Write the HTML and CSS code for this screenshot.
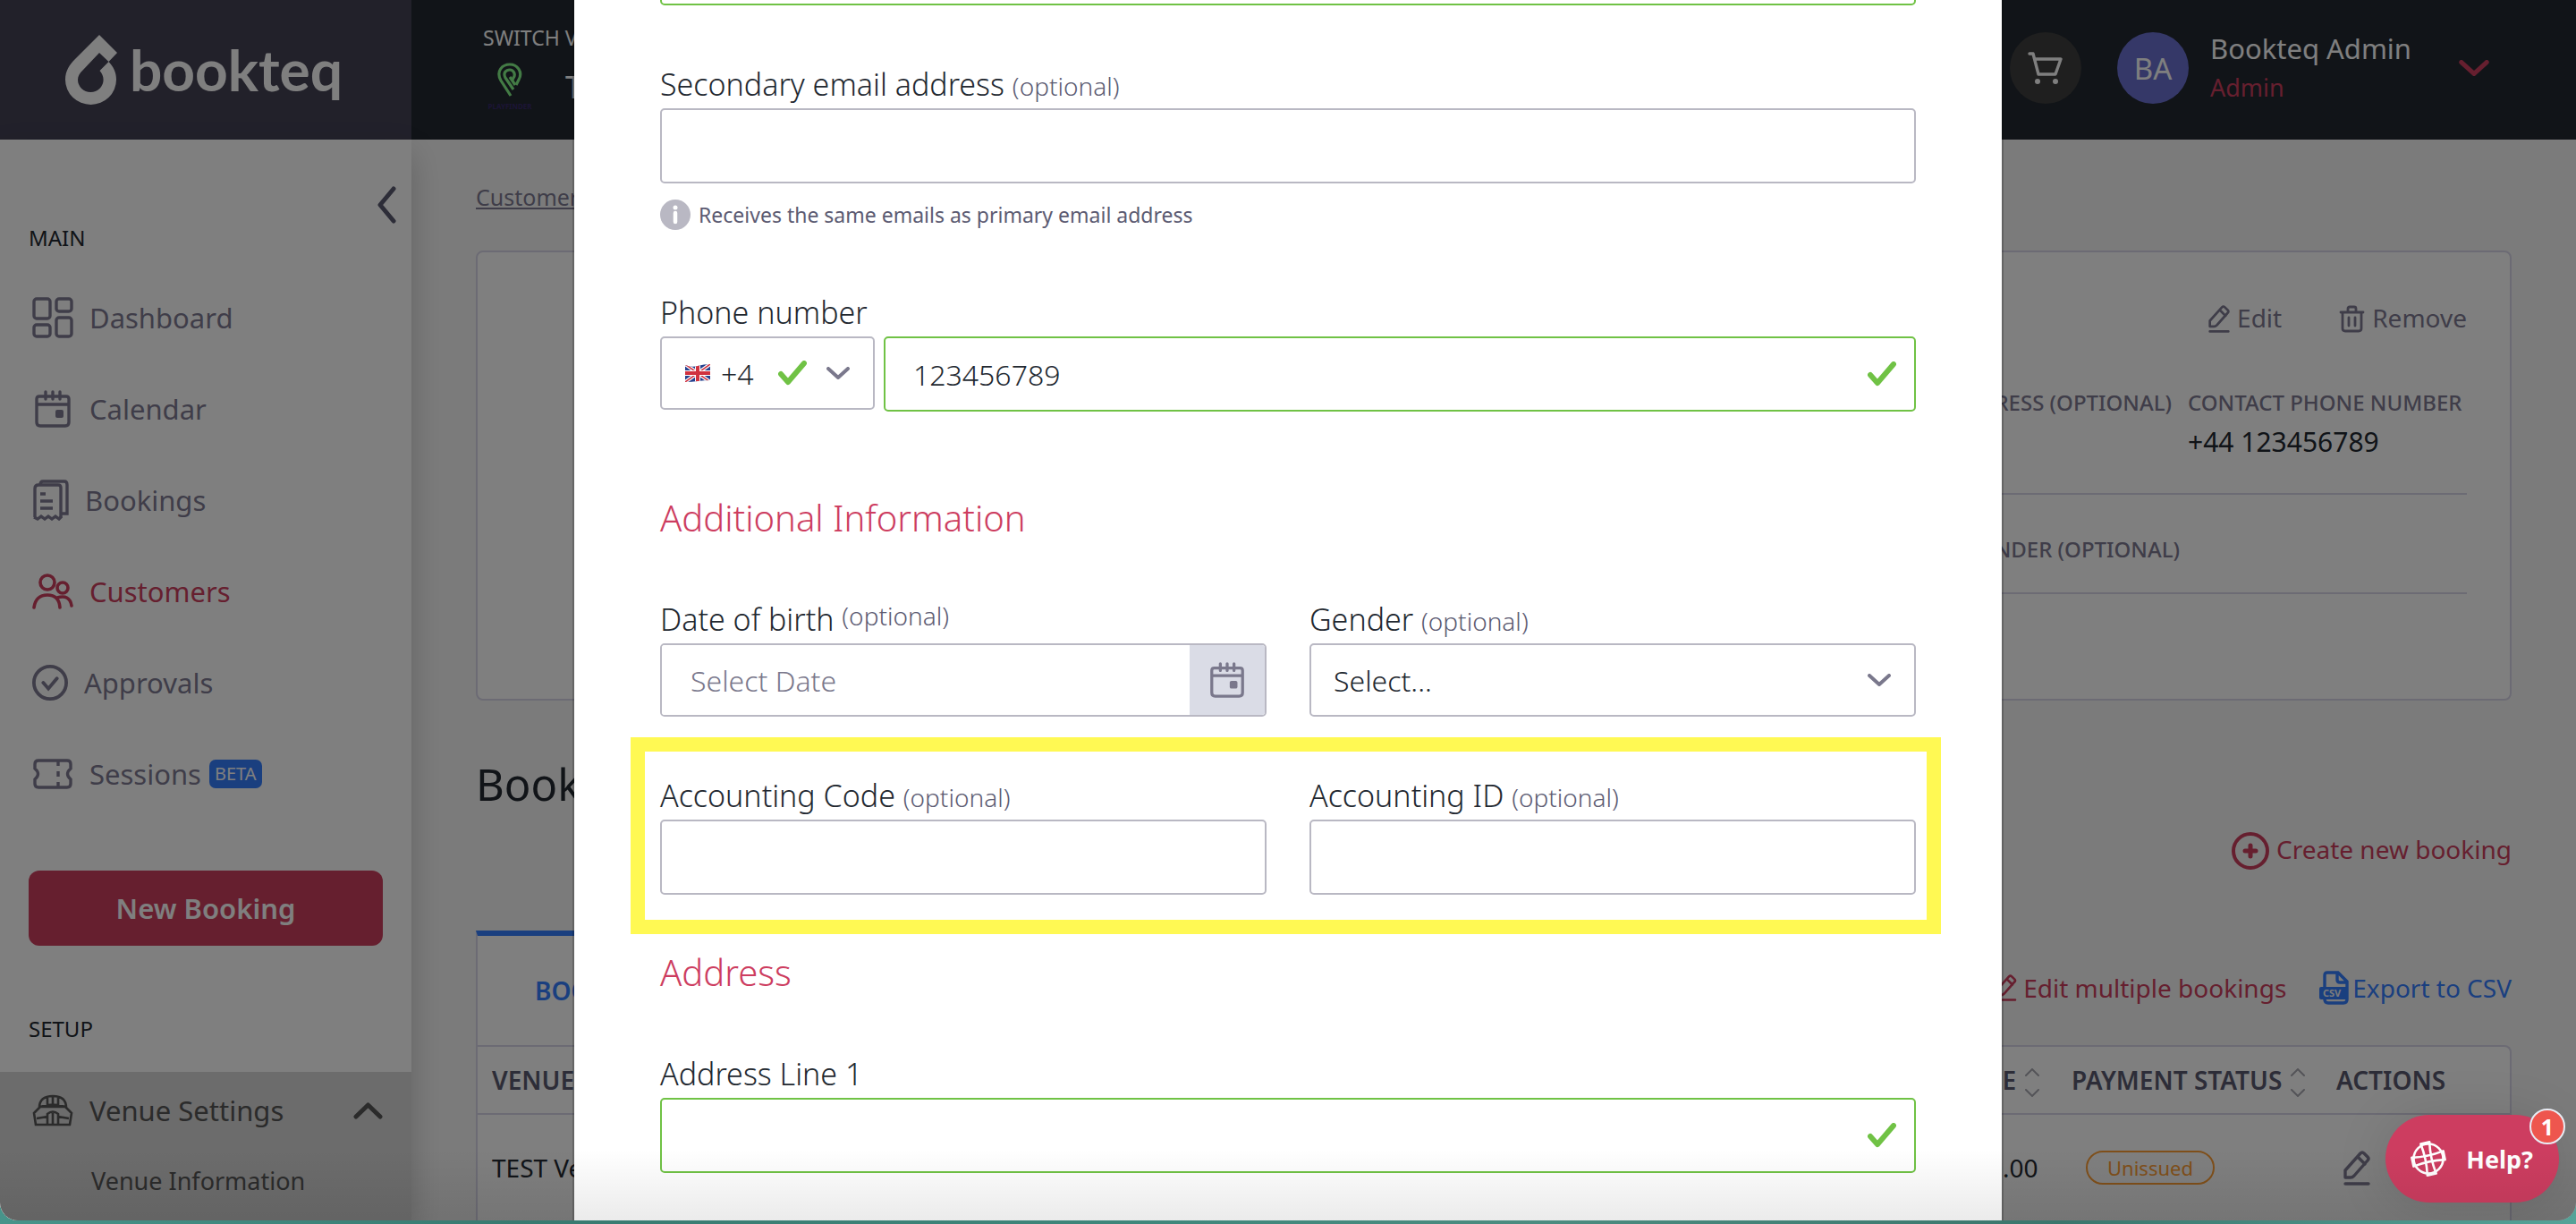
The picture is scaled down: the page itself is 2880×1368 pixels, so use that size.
FILE: index.html
```
<!DOCTYPE html>
<html lang="en">
<head>
<meta charset="utf-8">
<title>Bookteq – Edit customer</title>
<link rel="stylesheet" href="styles.css">
</head>
<body>
<svg class="sprite" aria-hidden="true">
  <symbol id="i-pencil" viewBox="0 0 30 39"><path d="M2 30v-8L19 3q2-2 4 0l4 4q2 2 0 4L12 28q-2 2-4 2zM16 7l8 8M2 37h26" fill="none" stroke="currentColor" stroke-width="3.400" stroke-linecap="round" stroke-linejoin="round"/></symbol>
  <symbol id="i-calendar" viewBox="0 0 46 46"><path d="M8 9h30q3 0 3 3v26q0 4-4 4H9q-4 0-4-4V12q0-3 3-3zM5 18h36M15 4v8M23 4v8M31 4v8" fill="none" stroke="currentColor" stroke-width="3.400" stroke-linecap="round"/><rect x="26" y="24" width="9" height="9" rx="2" fill="currentColor"/></symbol>
  <symbol id="i-down" viewBox="0 0 26 14"><path d="M2 2l11 10L24 2" fill="none" stroke="currentColor" stroke-width="4" stroke-linecap="round" stroke-linejoin="round"/></symbol>
  <symbol id="i-check" viewBox="0 0 32 28"><path d="M3 15l8 9L29 3" fill="none" stroke="currentColor" stroke-width="6" stroke-linecap="round" stroke-linejoin="round"/></symbol>
  <symbol id="i-sort" viewBox="0 0 18 32"><path d="M2 8l7-7 7 7M2 24l7 7 7-7" fill="none" stroke="currentColor" stroke-width="2" stroke-linecap="round"/></symbol>
</svg>
<div class="window">
  <div class="app">
    <header class="topbar">
      <a class="logo" href="#">
        <svg width="58" height="78" viewBox="0 0 58 78"><path fill="currentColor" fill-rule="evenodd" d="M38 0l20 20-9.500 10C54 36 57 42 57 50a28.500 28 0 0 1-57 0C0 40 5 33 11 27zM38 20L20 39c-4 4-6 7-6 11a14.300 14 0 0 0 28.600 0c0-4-1.600-7-4.100-10l10-10z"/></svg>
        <span>bookteq</span>
      </a>
      <div class="switch">
        <div class="switch-label">SWITCH VENUE</div>
        <div class="switch-row">
          <span class="venue-logo">
            <svg width="28" height="40" viewBox="0 0 28 40"><path d="M15 37L4 20C-2 9 6 2 14 2s15 8 10 17l-3 6M18 30L9 17c-3-6 1-9 5-9s7 5 4 9l-1 2M20 25l-6-9" fill="none" stroke="currentColor" stroke-width="3.200"/></svg>
            <small>PLAYFINDER</small>
          </span>
          <span class="venue-name">TEST</span>
        </div>
      </div>
      <button class="cart" type="button" aria-label="Basket"><svg width="40" height="38" viewBox="0 0 40 38"><path d="M2 3h4l6 23h19l6-17H8" fill="none" stroke="currentColor" stroke-width="3.400" stroke-linecap="round" stroke-linejoin="round"/><circle cx="11" cy="34" r="3" fill="currentColor"/><circle cx="31" cy="34" r="3" fill="currentColor"/></svg></button>
      <button class="user" type="button">
        <span class="avatar">BA</span>
        <span class="user-text"><span class="user-name">Bookteq Admin</span><span class="user-role">Admin</span></span>
        <svg class="user-chev" width="34" height="18"><use href="#i-down"/></svg>
      </button>
    </header>
    <nav class="sidebar">
      <button class="collapse" type="button" aria-label="Collapse menu"><svg width="22" height="42" viewBox="0 0 22 42"><path d="M19 3L4 21l15 18" fill="none" stroke="currentColor" stroke-width="5" stroke-linecap="round" stroke-linejoin="round"/></svg></button>
      <div class="side-label">MAIN</div>
      <ul class="menu">
        <li><a href="#"><svg width="46" height="46" viewBox="0 0 46 46" fill="none" stroke="currentColor" stroke-width="3.400"><rect x="2" y="2" width="18" height="22" rx="3"/><rect x="27" y="2" width="17" height="14" rx="3"/><rect x="2" y="31" width="18" height="13" rx="3"/><rect x="27" y="23" width="17" height="21" rx="3"/></svg>Dashboard</a></li>
        <li><a href="#"><svg width="46" height="46"><use href="#i-calendar"/></svg>Calendar</a></li>
        <li><a href="#"><svg width="41" height="46" viewBox="0 0 41 46" fill="none" stroke="currentColor" stroke-width="3.400"><path d="M3 42V10q0-4 4-4h22q3 0 3 3v33M9 6q0-4 3-4h24q3 0 3 4v32h-6M9 16h6M9 24h14M9 32h14"/><path d="M2 42l4 2 4-3 4 3 4-3 4 3 4-3 4 3 3-3"/></svg>Bookings</a></li>
        <li class="active"><a href="#"><svg width="46" height="40" viewBox="0 0 46 40" fill="none" stroke="currentColor" stroke-width="3.600" stroke-linecap="round"><circle cx="17" cy="10" r="8"/><circle cx="34" cy="16" r="6"/><path d="M2 38q2-14 15-14t14 14M28 27q14-4 16 9"/></svg>Customers</a></li>
        <li><a href="#"><svg width="40" height="42" viewBox="0 0 42 42" fill="none" stroke="currentColor" stroke-width="4" stroke-linecap="round"><circle cx="21" cy="21" r="19"/><path d="M13 21l6 7 10-12"/></svg>Approvals</a></li>
        <li><a href="#"><svg width="46" height="34" viewBox="0 0 46 34" fill="none" stroke="currentColor" stroke-width="3.400"><path d="M7 2h32q4 0 4 4v5q-7 6 0 12v5q0 4-4 4H7q-4 0-4-4v-5q7-6 0-12V6q0-4 4-4zM29 3v5M29 14v6M29 26v5"/></svg>Sessions<span class="beta">BETA</span></a></li>
      </ul>
      <button class="new-booking" type="button">New Booking</button>
      <div class="side-label setup">SETUP</div>
      <div class="venue-menu">
        <a class="venue-head" href="#"><svg width="46" height="36" viewBox="0 0 46 36" fill="none" stroke="currentColor" stroke-width="2.600"><path d="M8 15q0-13 15-13t15 13M4 34L2 21l7-7q14-5 28 0l7 7-2 13zM9 14h28M17 3v10M23 3v10M29 3v10M17 33V22q6-5 12 0v11M23 21v12M5 27l12-2M41 27l-12-2"/></svg><span>Venue Settings</span><svg class="up" width="33" height="19" viewBox="0 0 33 19"><path d="M3 16L16.500 3 30 16" fill="none" stroke="currentColor" stroke-width="5" stroke-linecap="round" stroke-linejoin="round"/></svg></a>
        <a class="venue-sub" href="#">Venue Information</a>
      </div>
    </nav>
    <main class="main">
      <a class="crumb" href="#">Customers</a>
      <section class="card">
        <div class="card-actions">
          <a href="#"><svg width="24" height="31"><use href="#i-pencil"/></svg>Edit</a>
          <a href="#"><svg width="29" height="31" viewBox="0 0 29 31" fill="none" stroke="currentColor" stroke-width="2.800" stroke-linecap="round" stroke-linejoin="round"><path d="M2 8h25M4 8v18q0 3 3 3h15q3 0 3-3V8M10 8V4q0-2 2-2h5q2 0 2 2v4M11 14v9M18 14v9"/></svg>Remove</a>
        </div>
        <dl class="facts">
          <div><dt>SECONDARY EMAIL ADDRESS (OPTIONAL)</dt></div>
          <div class="fact-phone"><dt>CONTACT PHONE NUMBER</dt><dd>+44 123456789</dd></div>
        </dl>
        <dl class="facts facts-second">
          <div><dt>GENDER (OPTIONAL)</dt></div>
        </dl>
      </section>
      <h1>Bookings</h1>
      <div class="create-row"><a class="create" href="#"><svg width="42" height="42" viewBox="0 0 42 42" fill="none" stroke="currentColor" stroke-width="4" stroke-linecap="round"><circle cx="21" cy="21" r="19"/><path d="M21 15v12M15 21h12" stroke-width="5"/></svg>Create new booking</a></div>
      <div class="tabs">
        <button class="tab" type="button">BOOKINGS</button>
        <div class="tab-links">
          <a class="edit-many" href="#"><svg width="24" height="30"><use href="#i-pencil"/></svg>Edit multiple bookings</a>
          <a class="export" href="#"><svg width="34" height="38" viewBox="0 0 34 38"><path d="M6 18V5q0-3 3-3h12l10 10v20q0 4-4 4H10q-4 0-4-4M20 2v8q0 3 3 3h8" fill="none" stroke="currentColor" stroke-width="3.400"/><rect y="18" width="32" height="14" rx="2" fill="currentColor"/><text class="csv" x="4" y="29">CSV</text></svg>Export to CSV</a>
        </div>
      </div>
      <table class="bookings">
        <colgroup><col><col class="c-price"><col class="c-pay"><col class="c-act"></colgroup>
        <thead><tr><th>VENUE</th><th>PRICE<svg width="18" height="32"><use href="#i-sort"/></svg></th><th>PAYMENT STATUS<svg width="18" height="32"><use href="#i-sort"/></svg></th><th>ACTIONS</th></tr></thead>
        <tbody><tr><td>TEST Venue</td><td>£150.00</td><td><span class="status">Unissued</span></td><td><a class="row-edit" href="#" aria-label="Edit booking"><svg width="30" height="39"><use href="#i-pencil"/></svg></a></td></tr></tbody>
      </table>
    </main>
  </div>

  <div class="scrim">
    <form class="modal">
      <div class="modal-body">
        <input class="box valid" type="email" aria-label="Primary email address">
        <div class="field first">
          <label for="email2">Secondary email address <span class="opt">(optional)</span></label>
          <input class="box" id="email2" type="email">
          <p class="hint"><svg width="34" height="34" viewBox="0 0 34 34"><circle cx="17" cy="17" r="17" fill="#b9b8c3"/><circle cx="17" cy="9" r="2.500" fill="#fff"/><path d="M17 15v10" stroke="#fff" stroke-width="4.500" stroke-linecap="round"/></svg>Receives the same emails as primary email address</p>
        </div>
        <div class="field phone">
          <label for="phone">Phone number</label>
          <div class="phone-row">
            <div class="wrap code">
              <svg class="flag" width="28" height="22" viewBox="0 0 28 22"><clipPath id="wave"><path d="M0 2q7 3 14 1t14-2v18q-7 0-14 1T0 21z"/></clipPath><g clip-path="url(#wave)"><path fill="#24408e" d="M0 0h28v22H0z"/><path d="M0 1l28 20M28 1L0 21" stroke="#fff" stroke-width="4"/><path d="M0 1l28 20M28 1L0 21" stroke="#d0313f" stroke-width="1.500"/><path d="M14 0v22M0 11h28" stroke="#fff" stroke-width="6"/><path d="M14 0v22M0 11h28" stroke="#d0313f" stroke-width="4"/></g></svg>
              <select class="box short" aria-label="Country code"><option>+4</option></select>
              <svg class="tick" width="32" height="28"><use href="#i-check"/></svg>
              <svg class="chev" width="26" height="14"><use href="#i-down"/></svg>
            </div>
            <div class="wrap number">
              <input class="box valid" id="phone" type="tel" value="123456789">
              <svg class="tick" width="32" height="28"><use href="#i-check"/></svg>
            </div>
          </div>
        </div>
        <h2>Additional Information</h2>
        <div class="cols">
          <div class="field">
            <label for="dob">Date of birth <span class="opt raised">(optional)</span></label>
            <div class="date"><input class="date-text" id="dob" type="text" placeholder="Select Date"><button class="date-btn" type="button" aria-label="Open calendar"><svg width="44" height="44"><use href="#i-calendar"/></svg></button></div>
          </div>
          <div class="field">
            <label for="gender">Gender <span class="opt">(optional)</span></label>
            <div class="wrap"><select class="box short gender" id="gender"><option>Select...</option></select><svg class="chev" width="26" height="14"><use href="#i-down"/></svg></div>
          </div>
        </div>
        <div class="cols highlight">
          <div class="field"><label for="acode">Accounting Code <span class="opt">(optional)</span></label><input class="box" id="acode" type="text"></div>
          <div class="field"><label for="aid">Accounting ID <span class="opt">(optional)</span></label><input class="box" id="aid" type="text"></div>
        </div>
        <h2 class="tight">Address</h2>
        <div class="field">
          <label for="addr1">Address Line 1</label>
          <div class="wrap"><input class="box valid" id="addr1" type="text"><svg class="tick" width="32" height="28"><use href="#i-check"/></svg></div>
        </div>
      </div>
    </form>
  </div>
  <button class="help" type="button">
    <svg width="40" height="40" viewBox="0 0 40 40" fill="none" stroke="currentColor" stroke-width="2.600" stroke-linejoin="round"><circle cx="20" cy="20" r="16.500"/><path transform="rotate(-12 20 20)" d="M15 2Q18 20 15 38h10Q22 20 25 2zM2 15Q20 18 38 15v10Q20 22 2 25z"/></svg>
    <span>Help?</span>
    <span class="count">1</span>
  </button>
</div>
</body>
</html>
```
FILE: styles.css
```
* { box-sizing: border-box; }

body {
  margin: 0;
  background: linear-gradient(90deg, #47948a, #387a70 20%, #3f877b 45%, #4c8c80 60%, #3a766c 80%, #55a398);
  color: #222830;
  font-family: "Noto Sans", "Open Sans", sans-serif;
  font-size: 28px;
}

a { color: inherit; text-decoration: none; }
button, input, select { font-family: inherit; color: inherit; }
button { border: 0; padding: 0; background: none; }
svg { flex: none; display: block; }
.sprite { position: absolute; width: 0; height: 0; }

.window {
  position: relative;
  height: calc(100vh - 4px);
  overflow: hidden;
  border-radius: 0 0 20px 20px;
}

/* soft shade along the bottom edge of the window */
.window::after {
  content: "";
  position: absolute;
  inset: auto 0 0;
  z-index: 4;
  height: 80px;
  background: linear-gradient(transparent, rgba(0, 0, 0, .08));
  pointer-events: none;
}

.app {
  display: grid;
  grid-template: 156px auto / 460px minmax(0, 1fr);
  min-height: 100%;
  background: #f7f7f7;
}

/* top bar */
.topbar {
  grid-column: 1 / -1;
  display: flex;
  align-items: center;
  padding-right: 97px;
  background: #222830;
  color: #fff;
}
.logo {
  display: flex;
  align-items: center;
  gap: 14px;
  align-self: stretch;
  width: 460px;
  padding-left: 73px;
  background: #444255;
  font: 700 64px/78px Lato, sans-serif;
}
.switch { flex: 1; align-self: flex-start; padding: 26px 0 0 80px; }
.switch-label { font-size: 23px; line-height: 32px; }
.switch-row { display: flex; align-items: center; gap: 32px; padding-top: 12px; }
.venue-logo { display: flex; flex-direction: column; align-items: center; gap: 4px; width: 60px; color: #86f68a; }
.venue-logo small { color: #38286c; font-size: 8px; font-weight: 700; line-height: 10px; }
.venue-name { font-size: 34px; line-height: 46px; }
.cart, .user { margin-bottom: 4px; }
.cart, .avatar {
  display: flex;
  align-items: center;
  justify-content: center;
  width: 80px;
  height: 80px;
  border-radius: 50%;
}
.cart { margin-right: 40px; background: #3e3e3e; color: #fff; }
.user { display: flex; align-items: center; text-align: left; }
.avatar { margin-right: 24px; background: #6a70d0; font-size: 33px; }
.user-text { display: flex; flex-direction: column; width: 278px; }
.user-name { font-size: 31px; line-height: 44px; }
.user-role { font-size: 27px; line-height: 44px; color: #cc3f5e; }
.user-chev { color: #cc3f5e; }

/* sidebar */
.sidebar {
  z-index: 1;
  display: flex;
  flex-direction: column;
  padding-top: 52px;
  background: #fff;
  color: #7e7b92;
  box-shadow: 0 16px 34px rgba(0, 0, 0, .2);
}
.collapse { align-self: flex-end; margin-right: 17px; color: #5a5a70; }
.side-label { padding-left: 32px; font-size: 24px; line-height: 32px; color: #222830; }
.menu { margin: 22px 0 57px; padding: 0; list-style: none; }
.menu a {
  display: flex;
  align-items: center;
  gap: 18px;
  height: 102px;
  padding-left: 36px;
  font-size: 31px;
}
.menu .active { color: #cc3f5e; }
.beta {
  margin-left: -9px;
  padding: 0 6px;
  border-radius: 7px;
  background: #347eff;
  color: #fff;
  font-size: 20px;
  line-height: 32px;
}
.new-booking {
  height: 84px;
  margin: 0 32px;
  border-radius: 12px;
  background: #cc3f5e;
  color: #fff;
  font-size: 31px;
  font-weight: 600;
}
.setup { margin: 77px 0 32px; }
.venue-menu { flex: 1; background: #d8d8d8; color: #565656; }
.venue-head { display: flex; align-items: center; gap: 18px; height: 86px; padding: 0 32px 0 36px; font-size: 31px; }
.venue-head .up { margin-left: auto; }
.venue-sub { display: block; padding-left: 102px; font-size: 27px; line-height: 72px; }

/* page behind the dialog */
.main { padding: 47px 72px 0; color: #7e7b92; }
.crumb { display: block; width: max-content; font-size: 25px; line-height: 34px; text-decoration: underline; }
.card {
  margin-top: 43px;
  padding: 59px 48px 117px;
  border: 2px solid #d8d6e8;
  border-radius: 8px;
  background: #fff;
}
.card-actions { display: flex; justify-content: flex-end; gap: 64px; height: 32px; line-height: 28px; }
.card-actions a { display: flex; align-items: flex-start; gap: 8px; }
.facts {
  display: flex;
  justify-content: flex-end;
  gap: 18px;
  margin: 61px 0 0 30%;
  padding-bottom: 37px;
  border-bottom: 2px solid #d8d6e8;
}
.facts dt { font-size: 24px; font-weight: 500; line-height: 32px; }
.facts dd { margin: 8px 0 0; font-size: 30px; line-height: 40px; color: #222830; }
.fact-phone { min-width: 312px; }
.facts-second { margin-top: 0; padding: 45px 321px 32px 0; }
h1 { margin: 63px 0 24px; font-size: 49px; font-weight: 400; line-height: 60px; color: #222830; }
.create-row { display: flex; justify-content: flex-end; }
.create { display: flex; align-items: flex-start; gap: 8px; line-height: 38px; color: #cc3f5e; }
.tabs { display: flex; justify-content: space-between; height: 128px; margin-top: 68px; }
.tab {
  padding: 0 64px;
  border: 0 solid #d8d6e8;
  border-width: 6px 2px 0;
  border-top-color: #347eff;
  background: #fff;
  color: #347eff;
  font-size: 28px;
  font-weight: 600;
}
.tab-links { display: flex; align-items: center; gap: 37px; }
.tab-links a { display: flex; align-items: center; gap: 7px; }
.tab-links .export { gap: 3px; color: #347eff; }
.edit-many { color: #cc3f5e; }
.csv { fill: #f7f7f7; font-size: 11px; font-weight: 700; }

.bookings {
  width: 100%;
  table-layout: fixed;
  border-collapse: separate;
  border-spacing: 0;
  border: 2px solid #d8d6e8;
  border-bottom: 0;
  border-radius: 0 8px 0 0;
  background: #fff;
  color: #222830;
}
.c-price { width: 141px; }
.c-pay { width: 296px; }
.c-act { width: 210px; }
.bookings th, .bookings td { padding: 0 0 0 16px; text-align: left; }
.bookings th { height: 76px; border-bottom: 2px solid #d8d6e8; font-weight: 600; color: #5a5a70; white-space: nowrap; }
.bookings th svg { display: inline-block; margin-left: 9px; vertical-align: middle; color: #a8a8b0; }
.bookings td { height: 118px; }
.status {
  display: block;
  width: 144px;
  margin-left: 16px;
  border: 2px solid #fe9e34;
  border-radius: 19px;
  color: #fe9e34;
  font-size: 22px;
  line-height: 34px;
  text-align: center;
}
.row-edit { display: block; width: 30px; margin-left: 8px; color: #7e7b92; }

/* dialog */
.scrim {
  position: absolute;
  inset: 0;
  z-index: 2;
  display: flex;
  justify-content: center;
  background: rgba(0, 0, 0, .5);
}
.modal {
  width: 1596px;
  overflow: hidden;
  background: #fff;
  box-shadow: 0 0 0 2px rgba(0, 0, 0, .2);
  font-weight: 300;
}
/* scrolled part-way down the form */
.modal-body { margin-top: -78px; padding: 0 96px 96px; }
.box {
  display: block;
  width: 100%;
  height: 84px;
  padding: 0 31px;
  border: 2px solid #b9b8c3;
  border-radius: 5px;
  background: #fff;
  font-size: 32px;
  font-weight: 300;
}
.box.valid { border-color: #70c245; }
.box.short { height: 82px; appearance: none; }
.field label { display: block; height: 46px; margin-bottom: 4px; font-size: 34px; line-height: 46px; }
.field.first { margin-top: 65px; }
.opt { font-size: 28px; line-height: 1; color: #5c5b72; }
.opt.raised { line-height: normal; vertical-align: text-top; }
.hint {
  display: flex;
  align-items: center;
  gap: 9px;
  margin: 18px 0 69px;
  color: #5c5b72;
  font-size: 23px;
  font-weight: 400;
  line-height: 34px;
}
.phone-row { display: flex; gap: 10px; }
.wrap { position: relative; }
.code { width: 240px; height: 82px; }
.code .box { padding-left: 66px; }
.number { flex: 1; }
.flag, .tick, .chev { position: absolute; top: 50%; transform: translateY(-50%); pointer-events: none; }
.flag { left: 28px; }
.tick { right: 22px; color: #70c245; }
.chev { right: 28px; color: #7a788c; }
.code .tick { right: 76px; }
.box.gender { padding-left: 25px; }
h2 { margin: 93px 0 64px; color: #cd3d60; font-size: 40px; font-weight: 300; line-height: 52px; }
h2.tight { margin-top: 17px; }
.cols { display: grid; grid-template-columns: 1fr 1fr; gap: 48px; }
.date { display: flex; height: 82px; border: 2px solid #b9b8c3; border-radius: 5px; overflow: hidden; }
.date-text { flex: 1; min-width: 0; padding: 0 32px; border: 0; font-size: 32px; font-weight: 300; }
.date-text::placeholder { color: #7a788c; opacity: 1; }
.date-btn { display: flex; align-items: center; justify-content: center; width: 84px; background: #dadce6; color: #7a788c; }
.highlight { margin: 23px -28px 0 -33px; padding: 26px 12px 28px 17px; border: 16px solid #fff953; }

.help {
  position: absolute;
  right: 19px;
  bottom: 20px;
  z-index: 3;
  display: flex;
  align-items: center;
  gap: 22px;
  height: 98px;
  padding: 0 29px 0 28px;
  border-radius: 49px;
  background: #cd3d60;
  color: #fff;
  font-size: 27px;
  font-weight: 700;
  box-shadow: 0 4px 60px rgba(0, 0, 0, .12);
}
.count {
  position: absolute;
  top: -7px;
  right: -7px;
  width: 40px;
  border: 2px solid #e8ecf4;
  border-radius: 50%;
  background: #ee564e;
  font-size: 25px;
  line-height: 36px;
  text-align: center;
}
```
